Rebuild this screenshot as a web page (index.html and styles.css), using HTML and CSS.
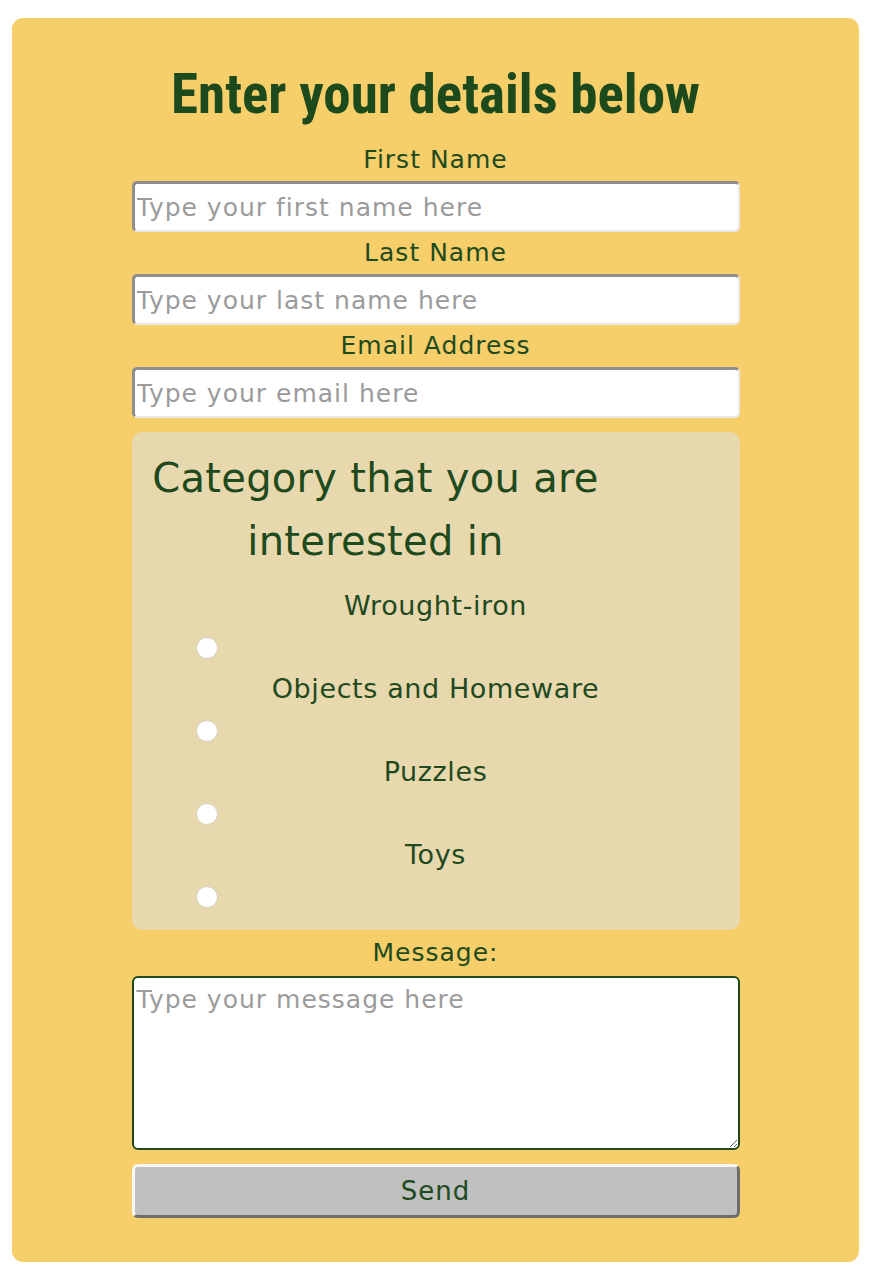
FILE: index.html
```html
<!DOCTYPE html>
<html lang="en">
<head>
<meta charset="utf-8">
<title>Enter your details below</title>
<link rel="stylesheet" href="styles.css">
</head>
<body>
<main class="card">
  <h1 class="title">Enter your details below</h1>
  <form class="form">
    <label class="field-label" for="first">First Name</label>
    <input class="text-input" id="first" type="text" placeholder="Type your first name here">
    <label class="field-label" for="last">Last Name</label>
    <input class="text-input" id="last" type="text" placeholder="Type your last name here">
    <label class="field-label" for="email">Email Address</label>
    <input class="text-input" id="email" type="email" placeholder="Type your email here">

    <fieldset class="category">
      <legend class="category-title">Category that you are interested in</legend>
      <div class="options">
        <label class="option-label" for="c1">Wrought-iron</label>
        <input class="radio" type="radio" id="c1" name="category">
        <label class="option-label" for="c2">Objects and Homeware</label>
        <input class="radio" type="radio" id="c2" name="category">
        <label class="option-label" for="c3">Puzzles</label>
        <input class="radio" type="radio" id="c3" name="category">
        <label class="option-label" for="c4">Toys</label>
        <input class="radio" type="radio" id="c4" name="category">
      </div>
    </fieldset>

    <label class="field-label message-label" for="msg">Message:</label>
    <textarea class="message" id="msg" placeholder="Type your message here"></textarea>
    <button class="send" type="button">Send</button>
  </form>
</main>
</body>
</html>
```

FILE: styles.css
```css
html, body {
  margin: 0;
  padding: 0;
  background: #ffffff;
}

body {
  font-family: "DejaVu Sans", "Noto Sans", sans-serif;
  color: #1e4a1e;
}

.card {
  width: 847px;
  box-sizing: border-box;
  margin: 18px 14px 18px 12px;
  padding: 44px 0 44px;
  background: #f6ce6a;
  border-radius: 11px;
}

.title {
  margin: 0 0 13px;
  text-align: center;
  font-family: "Roboto Condensed", "Liberation Sans Narrow", "DejaVu Sans Condensed", sans-serif;
  font-weight: 700;
  font-size: 55px;
  line-height: 64px;
  color: #1d4a1c;
}

.form {
  width: 608px;
  margin: 0 auto;
  display: flex;
  flex-direction: column;
}

.field-label {
  display: block;
  text-align: center;
  font-size: 25px;
  line-height: 42px;
  letter-spacing: 1px;
}

.text-input {
  box-sizing: border-box;
  width: 100%;
  height: 51px;
  margin: 0;
  padding: 0 2px;
  font-family: inherit;
  font-size: 25px;
  letter-spacing: 1px;
  color: #1e4a1e;
  background: #ffffff;
  border-style: solid;
  border-width: 3px 2px 2px 3px;
  border-color: #8e8e8e #e9e9e9 #e9e9e9 #8e8e8e;
  border-radius: 5px;
}

.text-input::placeholder,
.message::placeholder {
  color: #9b9b9b;
}

.category {
  margin: 14px 0 0;
  padding: 15px 14px 12px;
  border: 0;
  border-radius: 10px;
  background: #e8d8ae;
  min-width: 0;
}

.category-title {
  float: left;
  width: 460px;
  padding: 0;
  text-align: center;
  font-size: 40px;
  line-height: 63px;
  letter-spacing: 0.3px;
}

.options {
  clear: both;
  padding-top: 13px;
  display: flex;
  flex-direction: column;
}

.option-label {
  display: block;
  text-align: center;
  font-size: 27px;
  line-height: 40px;
  letter-spacing: 0.6px;
}

.radio {
  appearance: none;
  -webkit-appearance: none;
  display: block;
  width: 22px;
  height: 22px;
  margin: 11px 0 10px 50px;
  border: 1px solid #d9d2c2;
  border-radius: 50%;
  background: #ffffff;
  box-sizing: border-box;
}

.message-label {
  line-height: 46px;
}

.message {
  box-sizing: border-box;
  width: 100%;
  height: 174px;
  margin: 0;
  padding: 7px 3px;
  font-family: inherit;
  font-size: 25px;
  letter-spacing: 1px;
  color: #1e4a1e;
  background: #ffffff;
  border: 2px solid #1e4a1e;
  border-radius: 6px;
  resize: both;
}

.send {
  box-sizing: border-box;
  width: 100%;
  height: 54px;
  margin: 14px 0 0;
  padding: 0;
  font-family: inherit;
  font-size: 26px;
  letter-spacing: 1px;
  color: #1e4a1e;
  background: #c0c0c0;
  border-style: solid;
  border-width: 3px;
  border-color: #f7f7f7 #6e6e6e #6e6e6e #f7f7f7;
  border-radius: 6px;
}
```
